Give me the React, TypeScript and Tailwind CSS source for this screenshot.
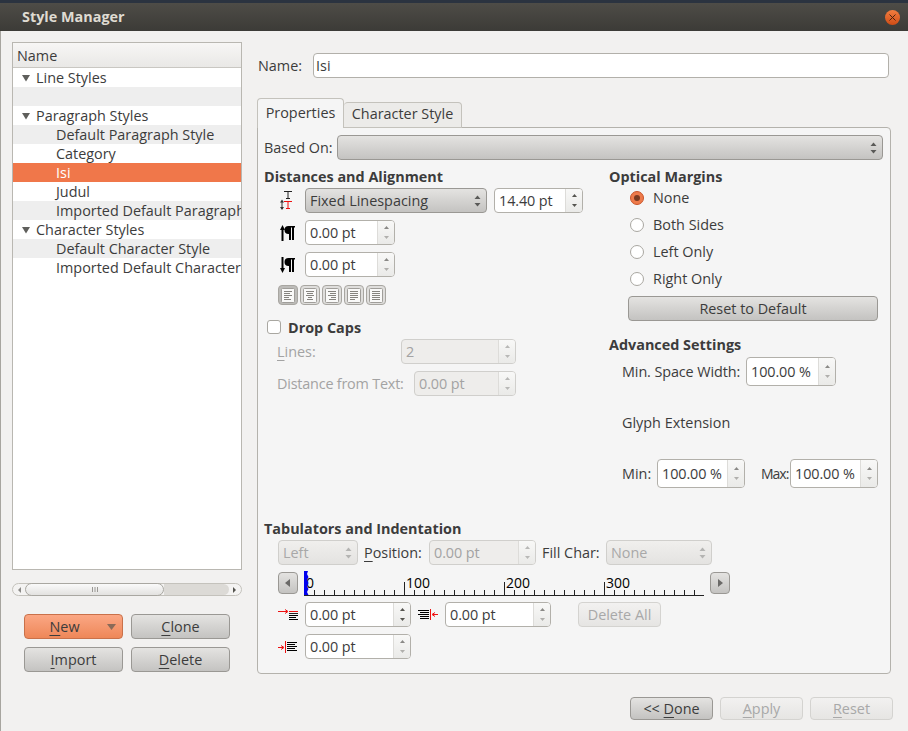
import React from "react";

const font = "font-['Open_Sans',sans-serif]";
const raised = "bg-linear-to-b from-[#e4e3e1] to-[#c4c3c1] border border-[#9a9894] rounded-[4px]";

const Stepper = ({ dim }: { dim?: boolean }) => (
  <svg width="9" height="14" viewBox="0 0 9 14">
    <path d="M4.5 1.500 L7.500 5 L1.500 5 Z" fill={dim ? "#b4b4b2" : "#5a5a58"} />
    <path d="M4.5 12.500 L7.500 9 L1.500 9 Z" fill={dim ? "#b4b4b2" : "#5a5a58"} />
  </svg>
);

const SpinArrows = ({ dark, off }: { dark?: boolean; off?: boolean }) => (
  <svg width="7" height="15" viewBox="0 0 7 15">
    <path d="M3.500 1 L6 4 L1 4 Z" fill={off ? "#b8b8b6" : dark ? "#55544f" : "#8a8986"} />
    <path d="M3.500 14 L6 11 L1 11 Z" fill={off ? "#b8b8b6" : dark ? "#55544f" : "#b0afac"} />
  </svg>
);

const Mn = ({ children }: { children: React.ReactNode }) => (
  <span className="underline decoration-1 underline-offset-[3px]">{children}</span>
);

const Spin = ({ w, value, h, off, dark }: { w: string; value: string; h?: string; off?: boolean; dark?: boolean }) => (
  <div
    className={`${w} ${h ?? "h-[25px]"} flex shrink-0 rounded-[4px] border overflow-hidden ${
      off ? "border-[#d0cfcc] bg-[#eeedeb] text-[#a3a3a3]" : "border-[#b2b0aa] bg-white text-[#3c3c3c]"
    }`}
  >
    <div className="flex-1 flex items-center pl-[4px] whitespace-nowrap tracking-[-0.1px]">{value}</div>
    <div className="w-[17px] flex items-center justify-center border-l border-[#dddcd9] bg-linear-to-b from-[#f8f8f7] to-[#eaeae8]">
      <SpinArrows dark={dark} off={off} />
    </div>
  </div>
);

const Select = ({ w, value, off, className }: { w: string; value?: string; off?: boolean; className?: string }) => (
  <div
    className={`${w} h-[25px] flex items-center justify-between shrink-0 pl-[4px] pr-[4px] rounded-[4px] border ${
      off
        ? "border-[#d0cfcc] bg-linear-to-b from-[#f0efed] to-[#e4e3e1] text-[#a8a8a8]"
        : `${raised} text-[#3c3c3c]`
    } ${className ?? ""}`}
  >
    <span>{value}</span>
    <Stepper dim={off} />
  </div>
);

const Btn = ({ w, children, off, className }: { w: string; children: React.ReactNode; off?: boolean; className?: string }) => (
  <div
    className={`${w} h-[25px] flex items-center justify-center shrink-0 rounded-[4px] border ${
      off
        ? "border-[#d4d3d0] bg-linear-to-b from-[#f2f1f0] to-[#e6e5e3] text-[#a8a8a8]"
        : `${raised} text-[#3c3c3c]`
    } ${className ?? ""}`}
  >
    {children}
  </div>
);

const Heading = ({ children, className }: { children: React.ReactNode; className?: string }) => (
  <div className={`h-[16px] pt-[2px] flex items-center font-bold text-[#3c3c3c] whitespace-nowrap ${className ?? ""}`}>{children}</div>
);

const Radio = ({ label, on }: { label: string; on?: boolean }) => (
  <div className="h-[27px] flex items-center pl-[21px]">
    <div
      className={`w-[14px] h-[14px] rounded-full border flex items-center justify-center ${
        on ? "border-[#c9552a] bg-[#ee7a4a]" : "border-[#a9a7a1] bg-white"
      }`}
    >
      {on && <div className="w-[6px] h-[6px] rounded-full bg-[#7a3a20]" />}
    </div>
    <span className="ml-[9px]">{label}</span>
  </div>
);

const Row = ({ text, arrow, indent, tone }: { text?: string; arrow?: boolean; indent?: boolean; tone?: "gray" | "sel" }) => (
  <div
    className={`h-[19px] flex items-center whitespace-nowrap ${
      tone === "gray" ? "bg-[#eeeeee]" : tone === "sel" ? "bg-[#f0774a] text-white" : "bg-white"
    } ${indent ? "pl-[43px]" : "pl-[8px]"}`}
  >
    {arrow && (
      <svg width="10" height="8" viewBox="0 0 10 8" className="mr-[5px] shrink-0">
        <path d="M1 1 L9 1 L5 7.5 Z" fill="#5f5f5c" />
      </svg>
    )}
    {text}
  </div>
);

const alignLines: [number, number][][] = [
  [[0, 8], [0, 6], [0, 8], [0, 5], [0, 7]],
  [[0, 8], [1, 7], [0, 8], [2, 6], [1, 7]],
  [[0, 8], [2, 8], [0, 8], [3, 8], [1, 8]],
  [[0, 8], [0, 8], [0, 8], [0, 8], [0, 5]],
  [[0, 8], [0, 8], [0, 8], [0, 8], [0, 8]],
];

const AlignBtn = ({ lines, on }: { lines: [number, number][]; on?: boolean }) => (
  <div
    className={`w-[20px] h-[20px] flex items-center justify-center rounded-[4px] border border-[#a8a6a1] ${
      on ? "bg-[#bdbcb9]" : "bg-[#dfdedc]"
    }`}
  >
    <svg width="14" height="15" viewBox="0 0 14 15">
      <rect x="0.5" y="0.5" width="13" height="14" rx="1" fill="#f9f9f8" stroke="#a09e9a" />
      {lines.map(([a, b], i) => (
        <rect key={i} x={3 + a} y={3 + i * 2} width={b - a} height="1" fill="#85837e" />
      ))}
    </svg>
  </div>
);

const LineSpacingIcon = () => (
  <svg width="13" height="19" viewBox="0 0 13 19">
    <path d="M4 0.500h8M8 0.500v6.500M6 7.500h4" stroke="#222" fill="none" />
    <path d="M4 10.500h8M8 10.500v7M6 17.500h4" stroke="#ee1111" fill="none" />
    <path d="M2 10v8" stroke="#333" />
    <path d="M2 8.500l-2 3h4zM2 19l-2-3h4z" fill="#333" />
  </svg>
);

const ParaIcon = ({ up }: { up?: boolean }) => (
  <svg width="16" height="16" viewBox="0 0 16 16">
    <path d={up ? "M2.500 3v13" : "M2.500 0v13"} stroke="#000" strokeWidth="2" />
    <path d={up ? "M2.500 0L0 5h5z" : "M2.500 16L0 11h5z"} fill="#000" />
    <path d="M9 1H8.500a3.500 3.500 0 0 0 0 8H9V1z" fill="#000" />
    <path d="M9 1h6v1.500h-1V15h-2V2.500h-1V15H9z" fill="#000" />
  </svg>
);

const IndentFirstIcon = () => (
  <svg width="20" height="12" viewBox="0 0 20 12">
    <path d="M0 2.500h9M7 0.500l3 2-3 2" stroke="#ee1111" fill="none" />
    <path d="M11 2.500h9" stroke="#ee1111" />
    <path d="M11 4.500h9" stroke="#222" />
    <path d="M11 6.500h9M11 8.500h7M11 10.500h9" stroke="#000" />
  </svg>
);

const IndentRightIcon = () => (
  <svg width="20" height="14" viewBox="0 0 20 14">
    <path d="M0 2.500h11M2 4.500h9M0 6.500h11M2 8.500h9M2 10.500h9" stroke="#000" />
    <path d="M12.500 1v11" stroke="#ee1111" />
    <path d="M20 6.500h-5M17 4.500l-3 2 3 2" stroke="#ee1111" fill="none" />
  </svg>
);

const IndentLeftIcon = () => (
  <svg width="20" height="14" viewBox="0 0 20 14">
    <path d="M0 7.500h5M3 5.500l3 2-3 2" stroke="#ee1111" fill="none" />
    <path d="M7.500 1v12" stroke="#ee1111" />
    <path d="M9 2.500h10M9 4.500h8M9 6.500h10M9 8.500h8M9 10.500h10" stroke="#000" />
  </svg>
);

const Ruler = () => {
  const ticks = Array.from({ length: 39 }, (_, i) => (i + 1) * 10);
  return (
    <svg width="400" height="25" viewBox="0 0 400 25" className="ml-[6px] shrink-0">
      {ticks.map((x) => (
        <path key={x} d={x % 100 === 0 ? `M${x + 0.5} 11V24` : `M${x + 0.5} 19V24`} stroke="#222" />
      ))}
      <path d="M0 24.500H400" stroke="#222" />
      {[["0", 2], ["100", 102], ["200", 202], ["300", 302]].map(([t, x]) => (
        <text key={t} x={x} y="17" fontSize="14" fill="#000" fontFamily="Open Sans, sans-serif">
          {t}
        </text>
      ))}
      <path d="M0 0H4L3 3L4.500 6L3 9L4.500 12L3 15L4.500 18L3 21L4.500 24H0Z" fill="#0000ee" />
    </svg>
  );
};

const ArrowBtn = ({ right, className }: { right?: boolean; className?: string }) => (
  <div className={`w-[20px] h-[22px] mt-[1px] shrink-0 flex items-center justify-center ${raised} ${className ?? ""}`}>
    <svg width="6" height="8" viewBox="0 0 6 8">
      <path d={right ? "M1 0L6 4L1 8Z" : "M5 0L0 4L5 8Z"} fill="#6b6a68" />
    </svg>
  </div>
);

export default function App() {
  return (
    <div className={`w-[908px] h-[731px] flex flex-col overflow-hidden bg-[#f2f1f0] text-[14.4px] text-[#3c3c3c] ${font}`}>
      <div className="h-[31px] shrink-0 flex items-center justify-between border-t-[3px] border-[#2b3340] bg-linear-to-b from-[#4e4c47] to-[#3c3b37] pl-[22px] pr-[8px]">
        <span className="font-bold text-[#dfdbd2]">Style Manager</span>
        <div className="w-[15px] h-[15px] rounded-full bg-linear-to-b from-[#f27d3f] to-[#cf4c14] flex items-center justify-center">
          <svg width="7" height="7" viewBox="0 0 7 7">
            <path d="M0.500 0.500L6.500 6.500M6.500 0.500L0.500 6.500" stroke="#4a2410" />
          </svg>
        </div>
      </div>

      <div className="flex-1 flex pl-[11px] border-l border-[#a7a59f]">
        <div className="w-[230px] shrink-0 pt-[11px]">
          <div className="h-[528px] border border-[#b9b7b1] bg-white overflow-hidden">
            <div className="h-[25px] flex items-center pl-[4px] pt-[2px] bg-linear-to-b from-[#f7f6f5] to-[#e9e8e6] border-b border-[#c9c7c2]">
              Name
            </div>
            <Row text="Line Styles" arrow />
            <Row tone="gray" />
            <Row text="Paragraph Styles" arrow />
            <Row text="Default Paragraph Style" indent tone="gray" />
            <Row text="Category" indent />
            <Row text="Isi" indent tone="sel" />
            <Row text="Judul" indent />
            <Row text="Imported Default Paragraph" indent tone="gray" />
            <Row text="Character Styles" arrow />
            <Row text="Default Character Style" indent tone="gray" />
            <Row text="Imported Default Character" indent />
          </div>

          <div className="mt-[13px] h-[13px] flex items-center rounded-full border border-[#c4c2bc] bg-[#f4f3f2]">
            <svg width="12" height="8" viewBox="0 0 12 8" className="shrink-0">
              <path d="M8 1L5 4L8 7Z" fill="#8c8b88" />
            </svg>
            <div className="w-[139px] h-[13px] rounded-full border border-[#a9a7a1] bg-linear-to-b from-[#fafafa] to-[#e3e2e0] flex items-center justify-center shrink-0">
              <svg width="8" height="5" viewBox="0 0 8 5">
                <path d="M1.500 0v5M4 0v5M6.500 0v5" stroke="#9a9894" />
              </svg>
            </div>
            <div className="flex-1 h-full bg-[#dcdad6] rounded-r-full" />
            <div className="w-[12px] h-full flex items-center justify-center shrink-0">
              <svg width="6" height="8" viewBox="0 0 6 8">
                <path d="M1 1L4 4L1 7Z" fill="#55544f" />
              </svg>
            </div>
          </div>

          <div className="mt-[18px] ml-[12px] grid grid-cols-[99px_99px] gap-x-[8px] gap-y-[8px]">
            <div className="h-[25px] relative flex items-center justify-center pr-[18px] rounded-[4px] border border-[#c9714a] bg-linear-to-b from-[#fba784] to-[#ee8758]">
              <span><Mn>N</Mn>ew</span>
              <svg width="9" height="6" viewBox="0 0 9 6" className="absolute right-[6px] top-[9px]">
                <path d="M0 0H9L4.500 6Z" fill="#8a6a58" />
              </svg>
            </div>
            <Btn w="w-[99px]"><span><Mn>C</Mn>lone</span></Btn>
            <Btn w="w-[99px]"><span><Mn>I</Mn>mport</span></Btn>
            <Btn w="w-[99px]"><span><Mn>D</Mn>elete</span></Btn>
          </div>
        </div>

        <div className="w-[636px] ml-[15px] shrink-0 pt-[22px]">
          <div className="h-[25px] flex items-center">
            <span className="w-[56px] pl-[1px] shrink-0">Name:</span>
            <div className="w-[576px] h-[25px] flex items-center pl-[2px] bg-white rounded-[4px] border border-[#b2b0aa]">Isi</div>
          </div>

          <div className="mt-[20px] h-[30px] flex items-end relative z-10">
            <div className="w-[87px] h-[30px] pb-[1px] flex items-center justify-center bg-[#f5f5f5] rounded-t-[4px] border border-b-0 border-[#c4c2bc]">
              Properties
            </div>
            <div className="w-[118px] h-[26px] pb-[2px] flex items-center justify-center bg-[#ecebe9] rounded-t-[4px] border border-l-0 border-[#c4c2bc]">
              Character Style
            </div>
          </div>

          <div className="-mt-[1px] w-[634px] h-[547px] bg-[#f5f5f5] rounded-b-[4px] rounded-tr-[4px] border border-[#b4b2ac] pl-[6px]">
            <div className="mt-[7px] h-[25px] flex items-center">
              <span className="w-[73px] shrink-0">Based On:</span>
              <Select w="w-[546px]" />
            </div>

            <div className="h-[361px] flex">
              <div className="w-[345px] shrink-0">
                <Heading className="mt-[8px]">Distances and Alignment</Heading>
                <div className="mt-[4px] h-[25px] flex items-center">
                  <div className="w-[41px] shrink-0 flex justify-end pr-[12px]"><LineSpacingIcon /></div>
                  <Select w="w-[182px]" value="Fixed Linespacing" />
                  <Spin w="w-[89px] ml-[7px]" value="14.40 pt" dark />
                </div>
                <div className="mt-[7px] h-[25px] flex items-center">
                  <div className="w-[41px] shrink-0 flex justify-end pr-[9px]"><ParaIcon up /></div>
                  <Spin w="w-[90px]" value="0.00 pt" />
                </div>
                <div className="mt-[7px] h-[25px] flex items-center">
                  <div className="w-[41px] shrink-0 flex justify-end pr-[9px]"><ParaIcon /></div>
                  <Spin w="w-[90px]" value="0.00 pt" />
                </div>
                <div className="mt-[8px] ml-[14px] flex gap-[2px]">
                  {alignLines.map((l, i) => (
                    <AlignBtn key={i} lines={l} on={i === 0} />
                  ))}
                </div>
                <div className="mt-[15px] h-[14px] flex items-center ml-[3px]">
                  <div className="w-[14px] h-[14px] rounded-[3px] border border-[#a9a7a1] bg-white" />
                  <span className="ml-[7px] mt-[2px] font-bold">Drop Caps</span>
                </div>
                <div className="mt-[5px] h-[25px] flex items-center text-[#a3a3a3]">
                  <span className="w-[137px] pl-[13px] shrink-0"><Mn>L</Mn>ines:</span>
                  <Spin w="w-[115px]" value="2" off />
                </div>
                <div className="mt-[7px] h-[25px] flex items-center text-[#a3a3a3]">
                  <span className="w-[150px] pl-[13px] shrink-0 whitespace-nowrap tracking-[-0.2px]">Distance from Text:</span>
                  <Spin w="w-[102px]" value="0.00 pt" off />
                </div>
              </div>

              <div className="flex-1">
                <Heading className="mt-[8px]">Optical Margins</Heading>
                <Radio label="None" on />
                <Radio label="Both Sides" />
                <Radio label="Left Only" />
                <Radio label="Right Only" />
                <Btn w="w-[250px] ml-[19px] mt-[4px]">Reset to Default</Btn>
                <Heading className="mt-[15px]">Advanced Settings</Heading>
                <div className="mt-[5px] h-[29px] flex items-center pl-[13px]">
                  <span className="w-[124px] shrink-0 whitespace-nowrap tracking-[-0.1px]">Min. Space Width:</span>
                  <Spin w="w-[90px]" h="h-[29px]" value="100.00 %" />
                </div>
                <div className="mt-[28px] h-[16px] pt-[2px] flex items-center pl-[13px]">Glyph Extension</div>
                <div className="mt-[29px] h-[29px] flex items-center pl-[13px]">
                  <span className="w-[35px] shrink-0">Min:</span>
                  <Spin w="w-[88px]" h="h-[29px]" value="100.00 %" />
                  <span className="w-[29px] ml-[16px] shrink-0 text-[14px] tracking-[-1px]">Max:</span>
                  <Spin w="w-[88px]" h="h-[29px]" value="100.00 %" />
                </div>
              </div>
            </div>

            <Heading className="-mt-[1px]">Tabulators and Indentation</Heading>
            <div className="mt-[4px] h-[25px] flex items-center pl-[14px]">
              <Select w="w-[80px]" value="Left" off />
              <span className="w-[65px] ml-[6px] shrink-0 whitespace-nowrap"><Mn>P</Mn>osition:</span>
              <Spin w="w-[107px]" value="0.00 pt" off />
              <span className="w-[64px] ml-[6px] shrink-0 whitespace-nowrap">Fill Char:</span>
              <Select w="w-[106px]" value="None" off />
            </div>
            <div className="mt-[6px] h-[25px] flex items-start pl-[14px]">
              <ArrowBtn />
              <Ruler />
              <ArrowBtn right className="ml-[6px]" />
            </div>
            <div className="mt-[6px] h-[25px] flex items-center pl-[14px]">
              <div className="w-[27px] shrink-0"><IndentFirstIcon /></div>
              <Spin w="w-[106px]" value="0.00 pt" dark />
              <div className="w-[20px] ml-[7px] shrink-0"><IndentRightIcon /></div>
              <Spin w="w-[106px] ml-[7px]" value="0.00 pt" />
              <Btn w="w-[83px] ml-[27px]" off>Delete All</Btn>
            </div>
            <div className="mt-[7px] h-[25px] flex items-center pl-[14px]">
              <div className="w-[27px] shrink-0"><IndentLeftIcon /></div>
              <Spin w="w-[106px]" value="0.00 pt" />
            </div>
          </div>

          <div className="mt-[23px] h-[23px] flex justify-end gap-[7px] w-[636px]">
            <Btn w="w-[83px] !h-[23px]"><span>&lt;&lt; <Mn>D</Mn>one</span></Btn>
            <Btn w="w-[83px] !h-[23px]" off><span><Mn>A</Mn>pply</span></Btn>
            <Btn w="w-[83px] !h-[23px]" off><span><Mn>R</Mn>eset</span></Btn>
          </div>
        </div>
      </div>
    </div>
  );
}
